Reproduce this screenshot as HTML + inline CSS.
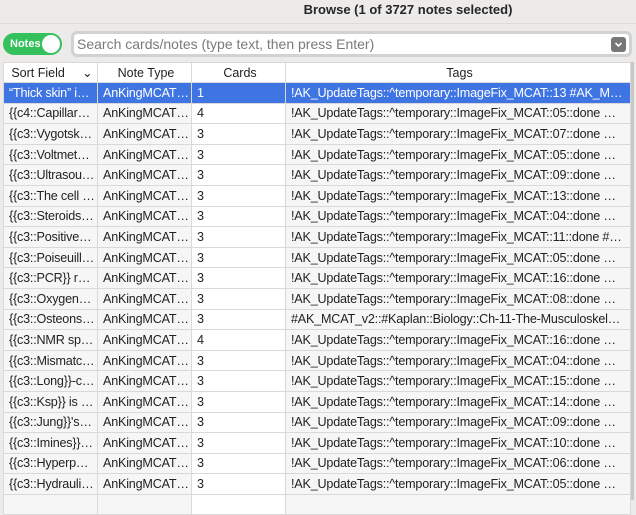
<!DOCTYPE html><html><head><style>
body{margin:0;width:636px;height:500px;overflow:hidden;background:#ecebea;font-family:"Liberation Sans",sans-serif;position:relative}
.title{position:absolute;left:0;top:0;width:636px;height:22px;text-align:center;font-weight:bold;font-size:13px;line-height:20px;color:#262626;padding-left:180px;box-sizing:border-box}
.sep{position:absolute;top:23px;left:0;width:636px;height:1px;background:#dedddc}
.tog{position:absolute;left:3px;top:33px;width:59px;height:22px;border-radius:11px;background:#34c05a;}
.tog span{position:absolute;left:7px;top:5px;color:#fff;font-size:11px;font-weight:bold}
.tog i{position:absolute;right:2px;top:2px;width:18px;height:18px;border-radius:9px;background:#fff}
.search{position:absolute;left:71px;top:31px;width:561px;height:26px;border-radius:6px;background:#d2d2d2;}
.search div{position:absolute;left:3px;top:3px;right:3px;bottom:3px;background:#fff;border-radius:3px;font-size:14px;color:#7a7a7a;line-height:20px;padding-left:3px}
.dd{position:absolute;right:3px;top:3px;width:15px;height:15px;background:#777;border-radius:3px;}
table{position:absolute;left:3px;top:62px;border-collapse:collapse;table-layout:fixed;width:628px;font-size:12.6px;letter-spacing:-0.2px;color:#222}
td,th{border:1px solid #d9d9d9;height:20.6px;padding:0 2px 0 5px;white-space:nowrap;overflow:hidden;text-overflow:ellipsis;box-sizing:border-box;line-height:18px}
th{background:#fff;font-weight:normal;text-align:center;height:20px;font-size:12.5px;letter-spacing:0}
td{background:#f6f6f6}
td.c{background:#fff}
tr.sel td{background:#3f74e3;color:#fff}
.edge{position:absolute;left:631px;top:62px;width:3px;height:438px;background:#c8c8c8}
</style></head><body>
<div class="title">Browse (1 of 3727 notes selected)</div><div class="sep"></div>
<div class="tog"><span>Notes</span><i></i></div>
<div class="search"><div>Search cards/notes (type text, then press Enter)<span class="dd"><svg width="15" height="15"><path d="M4.5 6 L7.5 9 L10.5 6" stroke="#fff" stroke-width="1.6" fill="none"/></svg></span></div></div>
<table><colgroup><col style="width:94px"><col style="width:94px"><col style="width:94px"><col></colgroup>
<tr><th>Sort Field &nbsp;&nbsp;&nbsp;&nbsp;⌄</th><th>Note Type</th><th>Cards</th><th>Tags</th></tr>
<tr class="sel"><td>“Thick skin” is …</td><td>AnKingMCAT…</td><td>1</td><td>!AK_UpdateTags::^temporary::ImageFix_MCAT::13 #AK_M…</td></tr>
<tr><td>{{c4::Capillary…</td><td>AnKingMCAT…</td><td class="c">4</td><td>!AK_UpdateTags::^temporary::ImageFix_MCAT::05::done …</td></tr>
<tr><td>{{c3::Vygotsky…</td><td>AnKingMCAT…</td><td class="c">3</td><td>!AK_UpdateTags::^temporary::ImageFix_MCAT::07::done …</td></tr>
<tr><td>{{c3::Voltmete…</td><td>AnKingMCAT…</td><td class="c">3</td><td>!AK_UpdateTags::^temporary::ImageFix_MCAT::05::done …</td></tr>
<tr><td>{{c3::Ultrasou…</td><td>AnKingMCAT…</td><td class="c">3</td><td>!AK_UpdateTags::^temporary::ImageFix_MCAT::09::done …</td></tr>
<tr><td>{{c3::The cell …</td><td>AnKingMCAT…</td><td class="c">3</td><td>!AK_UpdateTags::^temporary::ImageFix_MCAT::13::done …</td></tr>
<tr><td>{{c3::Steroids}…</td><td>AnKingMCAT…</td><td class="c">3</td><td>!AK_UpdateTags::^temporary::ImageFix_MCAT::04::done …</td></tr>
<tr><td>{{c3::Positive}…</td><td>AnKingMCAT…</td><td class="c">3</td><td>!AK_UpdateTags::^temporary::ImageFix_MCAT::11::done #…</td></tr>
<tr><td>{{c3::Poiseuill…</td><td>AnKingMCAT…</td><td class="c">3</td><td>!AK_UpdateTags::^temporary::ImageFix_MCAT::05::done …</td></tr>
<tr><td>{{c3::PCR}} re…</td><td>AnKingMCAT…</td><td class="c">3</td><td>!AK_UpdateTags::^temporary::ImageFix_MCAT::16::done …</td></tr>
<tr><td>{{c3::Oxygena…</td><td>AnKingMCAT…</td><td class="c">3</td><td>!AK_UpdateTags::^temporary::ImageFix_MCAT::08::done …</td></tr>
<tr><td>{{c3::Osteons}…</td><td>AnKingMCAT…</td><td class="c">3</td><td>#AK_MCAT_v2::#Kaplan::Biology::Ch-11-The-Musculoskel…</td></tr>
<tr><td>{{c3::NMR sp…</td><td>AnKingMCAT…</td><td class="c">4</td><td>!AK_UpdateTags::^temporary::ImageFix_MCAT::16::done …</td></tr>
<tr><td>{{c3::Mismatc…</td><td>AnKingMCAT…</td><td class="c">3</td><td>!AK_UpdateTags::^temporary::ImageFix_MCAT::04::done …</td></tr>
<tr><td>{{c3::Long}}-c…</td><td>AnKingMCAT…</td><td class="c">3</td><td>!AK_UpdateTags::^temporary::ImageFix_MCAT::15::done …</td></tr>
<tr><td>{{c3::Ksp}} is t…</td><td>AnKingMCAT…</td><td class="c">3</td><td>!AK_UpdateTags::^temporary::ImageFix_MCAT::14::done …</td></tr>
<tr><td>{{c3::Jung}}'s t…</td><td>AnKingMCAT…</td><td class="c">3</td><td>!AK_UpdateTags::^temporary::ImageFix_MCAT::09::done …</td></tr>
<tr><td>{{c3::Imines}} …</td><td>AnKingMCAT…</td><td class="c">3</td><td>!AK_UpdateTags::^temporary::ImageFix_MCAT::10::done …</td></tr>
<tr><td>{{c3::Hyperpol…</td><td>AnKingMCAT…</td><td class="c">3</td><td>!AK_UpdateTags::^temporary::ImageFix_MCAT::06::done …</td></tr>
<tr><td>{{c3::Hydrauli…</td><td>AnKingMCAT…</td><td class="c">3</td><td>!AK_UpdateTags::^temporary::ImageFix_MCAT::05::done …</td></tr>
<tr><td></td><td></td><td class="c"></td><td></td></tr>
</table>
<div class="edge"></div>
</body></html>
